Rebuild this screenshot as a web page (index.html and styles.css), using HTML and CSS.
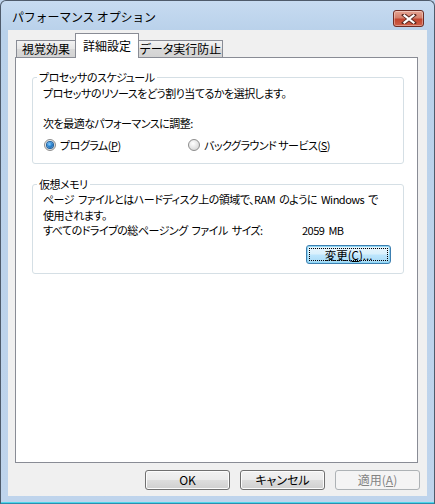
FILE: index.html
```html
<!DOCTYPE html>
<html lang="ja">
<head>
<meta charset="utf-8">
<title>パフォーマンス オプション</title>
<link rel="stylesheet" href="styles.css">
</head>
<body>
<div class="window">
  <div class="titlebar">
    <span class="title">パフォーマンス オプション</span>
    <span class="close">
      <svg width="16" height="10" viewBox="0 0 16 10"><path d="M3 1 L13 9 M13 1 L3 9" stroke="#5a2a22" stroke-width="4" stroke-linecap="square"/><path d="M3.5 1.5 L12.5 8.5 M12.5 1.5 L3.5 8.5" stroke="#ffffff" stroke-width="2.2" stroke-linecap="square"/></svg>
    </span>
  </div>
  <div class="client">
    <div class="tabs">
      <div class="tab t1">視覚効果</div>
      <div class="tab t2 active">詳細設定</div>
      <div class="tab t3">データ実行防止</div>
    </div>
    <div class="panel">
      <fieldset class="group g1">
        <legend>プロセッサのスケジュール</legend>
        <div class="line">プロセッサのリソースをどう割り当てるかを選択します。</div>
        <div class="line adjust">次を最適なパフォーマンスに調整:</div>
        <div class="radios">
          <label class="radio r1"><span class="dot checked"></span>プログラム(<u>P</u>)</label>
          <label class="radio"><span class="dot"></span>バックグラウンド サービス(<u>S</u>)</label>
        </div>
      </fieldset>
      <fieldset class="group g2">
        <legend>仮想メモリ</legend>
        <div class="para">ページ ファイルとはハードディスク上の領域で、RAM のように Windows で<br>使用されます。</div>
        <div class="sizerow"><span class="sizelabel">すべてのドライブの総ページング ファイル サイズ:</span><span class="sizeval">2059 MB</span></div>
        <div class="changerow"><span class="btn focused">変更(<u>C</u>)...</span></div>
      </fieldset>
    </div>
    <div class="buttons">
      <span class="btn">OK</span>
      <span class="btn">キャンセル</span>
      <span class="btn disabled">適用(<u>A</u>)</span>
    </div>
  </div>
</div>
</body>
</html>
```
FILE: styles.css
```css
* { box-sizing: border-box; }
html, body { margin: 0; padding: 0; }
body {
  width: 435px;
  height: 504px;
  overflow: hidden;
  font-family: "Noto Sans CJK JP", "Noto Sans", sans-serif;
  font-size: 12px;
  color: #000;
  background: #bfd4ec;
}
.window {
  width: 435px;
  height: 504px;
  border: 1px solid #4f5b6b;
  border-bottom-color: #2b8fb0;
  border-radius: 6px 6px 0 0;
  background: linear-gradient(to bottom, #c7dbf1 0px, #b9d1ea 30px, #bfd4ec 100%);
  padding: 0 7px 7px 7px;
  display: flex;
  flex-direction: column;
  box-shadow: inset 0 -1px 0 #4fd6ea;
}
.titlebar {
  height: 29px;
  display: flex;
  align-items: flex-start;
  padding-left: 4px;
  padding-right: 3px;
}
.title {
  margin-top: 8px;
  line-height: 16px;
  font-size: 12px;
  letter-spacing: -0.2px;
}
.close {
  margin-left: auto;
  margin-top: 9px;
  width: 31px;
  height: 17px;
  border: 1px solid #6e2c24;
  border-radius: 3px;
  background: linear-gradient(to bottom, #e6a593 0%, #d4806c 45%, #c2452f 55%, #cf6048 100%);
  box-shadow: inset 0 0 0 1px rgba(255,255,255,0.35);
  display: flex;
  align-items: center;
  justify-content: center;
}
.client {
  flex: 1;
  background: #f0f0f0;
  padding: 3px 9px 0 7px;
  display: flex;
  flex-direction: column;
  font-feature-settings: "palt";
}
.tabs {
  display: flex;
  align-items: flex-end;
  height: 24px;
  padding-left: 1px;
  position: relative;
  z-index: 1;
  font-size: 12px;
}
.tab {
  height: 17px;
  line-height: 15px;
  border: 1px solid #898c95;
  border-bottom: none;
  background: linear-gradient(to bottom, #f3f3f3, #e5e5e5 50%, #d9d9d9 51%, #d3d3d3);
  margin-left: -1px;
  text-align: center;
}
.t1 { margin-left: 0; width: 60px; }
.t2 { width: 64px; }
.t3 { width: 85px; }
.tab.active {
  height: 25px;
  line-height: 21px;
  background: #fff;
  position: relative;
  z-index: 2;
  margin-bottom: -1px;
  padding-top: 1px;
}
.panel {
  width: 403px;
  height: 406px;
  background: #fff;
  border: 1px solid #898c95;
  padding: 0 13px 0 16px;
}
.group {
  margin: 0;
  border: 1px solid #d5dfe5;
  border-radius: 3px;
  padding: 2px 12px 0 10px;
  min-width: 0;
  width: 372px;
  font-size: 11px;
  letter-spacing: -0.5px;
}
.group legend {
  padding: 0 2px;
  margin-left: -6px;
  line-height: 14px;
}
.g1 { margin-top: 12px; padding-bottom: 11px; }
.g2 { margin-top: 13px; padding-top: 0; padding-bottom: 9px; }
.line { line-height: 14px; white-space: nowrap; }
.adjust { margin-top: 16px; }
.radios {
  display: flex;
  margin-top: 8px;
  line-height: 14px;
}
.radio {
  display: flex;
  align-items: center;
  margin-left: 1px;
  white-space: nowrap;
}
.r1 { width: 143px; }
.dot {
  width: 12px;
  height: 12px;
  border-radius: 50%;
  border: 1px solid #8d8d8d;
  background: radial-gradient(circle at 40% 35%, #ffffff 0%, #e6e6e6 50%, #cdcdcd 100%);
  margin-right: 4px;
  display: flex;
  align-items: center;
  justify-content: center;
  flex: none;
}
.dot.checked::before {
  content: "";
  width: 6px;
  height: 6px;
  border-radius: 50%;
  background: radial-gradient(circle at 40% 35%, #8fd0ff 0%, #2a86d4 45%, #0f4f96 100%);
  box-shadow: 0 0 0 1px #1d5f9e;
}
.para { line-height: 16px; white-space: nowrap; word-spacing: 2px; }
.sizerow {
  display: flex;
  margin-top: 0;
  line-height: 14px;
  white-space: nowrap;
  word-spacing: 2px;
}
.sizelabel { width: 259px; flex: none; }
.changerow {
  display: flex;
  justify-content: flex-end;
  margin-top: 8px;
}
.btn {
  width: 85px;
  height: 20px;
  border: 1px solid #707070;
  border-radius: 3px;
  background: linear-gradient(to bottom, #f2f2f2 0%, #ebebeb 48%, #dddddd 52%, #cfcfcf 100%);
  box-shadow: inset 0 0 0 1px #fcfcfc;
  display: flex;
  align-items: center;
  justify-content: center;
  line-height: 14px;
  position: relative;
  font-size: 12px;
  letter-spacing: 0;
  word-spacing: 0;
}
.changerow .btn { font-size: 11.5px; }
.btn.focused {
  height: 19px;
  border-color: #3c7fb1;
  box-shadow: inset 0 0 0 1px #8ed6f4;
  background: linear-gradient(to bottom, #eaf6fd 0%, #d9f0fc 48%, #bee6fd 52%, #a7d9f5 100%);
}
.btn.focused::after {
  content: "";
  position: absolute;
  inset: 2px;
  border: 1px dotted #000;
}
.btn.disabled {
  color: #838383;
  border-color: #adb2b5;
  background: #f4f4f4;
  box-shadow: none;
}
.buttons {
  display: flex;
  justify-content: flex-end;
  gap: 10px;
  margin-top: 7px;
  margin-right: -2px;
}
u { text-decoration: underline; text-underline-offset: 1px; }
```
